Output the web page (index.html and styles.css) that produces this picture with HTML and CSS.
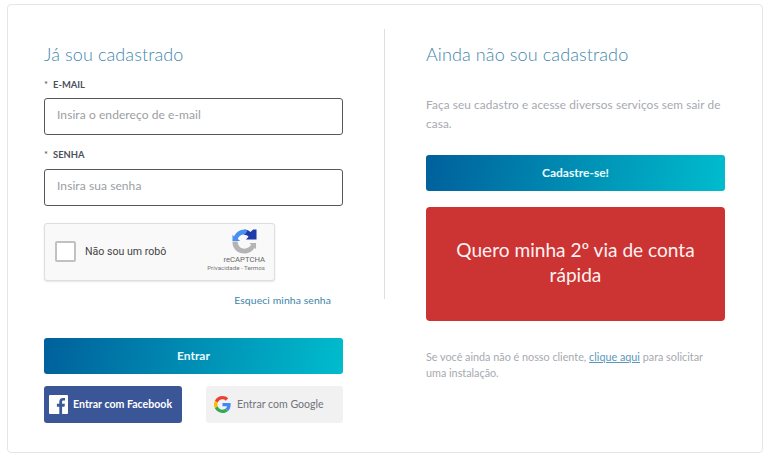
FILE: index.html
```html
<!DOCTYPE html>
<html lang="pt-BR">
<head>
<meta charset="utf-8">
<title>Login</title>
<link rel="stylesheet" href="styles.css">
</head>
<body>
<main class="card">
  <section class="col col-left">
    <h2 class="title">Já sou cadastrado</h2>
    <label class="label label-first"><span class="star">*</span>E-MAIL</label>
    <div class="input">Insira o endereço de e-mail</div>
    <label class="label label-second"><span class="star">*</span>SENHA</label>
    <div class="input">Insira sua senha</div>
    <div class="captcha">
      <span class="check"></span>
      <span class="captcha-text">Não sou um robô</span>
      <div class="captcha-brand">
        <svg class="captcha-logo" width="25" height="25" viewBox="0 0 26 26">
          <path d="M13 .5 C15.500 .5 17.500 1.500 19.200 3.200 L22 .5 L25.500 .5 L25.500 11 L14.500 11 L17.200 8 C16 6.700 14.500 6 12.500 6 Z" fill="#1c3aa9"/>
          <path d="M13 .5 C8 .5 4 3.500 2.200 7.800 L.5 6 L.5 12.500 L8.500 12.500 L6 10.500 C7 7.500 9.500 5.800 12.500 5.800 L13.500 5.800 L16 2 C15 1 14 .5 13 .5 Z" fill="#4a90f0"/>
          <path d="M.5 13 L.5 14 C.5 20.800 6 25.500 13 25.500 C17.500 25.500 21.500 23 23.500 19.500 L25 21 L25 14.500 L18 14.500 L20 16.500 C18.500 19 16 20.500 13 20.500 C9 20.500 6.500 17.500 6 14 L6 13 Z" fill="#b4b4b4"/>
        </svg>
        <span class="captcha-name">reCAPTCHA</span>
        <span class="captcha-links">Privacidade - Termos</span>
      </div>
    </div>
    <a class="forgot">Esqueci minha senha</a>
    <button class="btn btn-grad btn-enter">Entrar</button>
    <div class="social">
      <button class="btn btn-fb">
        <svg class="fb-icon" width="19" height="19" viewBox="0 0 19 19">
          <rect width="19" height="19" rx="1" fill="#fff"/>
          <path d="M13.100 19 V11.700 H15.500 L15.900 8.800 H13.100 V7 C13.100 6.200 13.300 5.600 14.500 5.600 H16 V3.100 C15.700 3 14.900 3 13.900 3 C11.800 3 10.300 4.300 10.300 6.700 V8.800 H7.900 V11.700 H10.300 V19 Z" fill="#3b5998"/>
        </svg>
        <span>Entrar com Facebook</span>
      </button>
      <button class="btn btn-google">
        <svg class="g-icon" width="17" height="17" viewBox="0 0 48 48">
          <path fill="#EA4335" d="M24 9.500c3.500 0 6.700 1.200 9.200 3.600l6.900-6.900C35.900 2.400 30.500 0 24 0 14.600 0 6.500 5.400 2.600 13.200l8 6.200C12.500 13.600 17.800 9.500 24 9.500z"/>
          <path fill="#4285F4" d="M46.900 24.500c0-1.600-.1-3.100-.4-4.500H24v9h12.900c-.6 3-2.200 5.500-4.700 7.200l7.700 6c4.500-4.200 7-10.300 7-17.700z"/>
          <path fill="#FBBC05" d="M10.500 28.600c-.5-1.400-.8-3-.8-4.600s.3-3.200.8-4.600l-8-6.200C.9 16.500 0 20.100 0 24s.9 7.500 2.600 10.800l7.900-6.200z"/>
          <path fill="#34A853" d="M24 48c6.500 0 11.900-2.100 15.900-5.800l-7.700-6c-2.200 1.500-4.900 2.300-8.200 2.300-6.200 0-11.500-4.200-13.400-9.800l-8 6.200C6.500 42.600 14.600 48 24 48z"/>
        </svg>
        <span>Entrar com Google</span>
      </button>
    </div>
  </section>
  <div class="divider"></div>
  <section class="col col-right">
    <h2 class="title">Ainda não sou cadastrado</h2>
    <p class="text text-top">Faça seu cadastro e acesse diversos serviços sem sair de casa.</p>
    <button class="btn btn-grad btn-signup">Cadastre-se!</button>
    <button class="btn-red">Quero minha 2º via de conta rápida</button>
    <p class="text text-bottom">Se você ainda não é nosso cliente, <a class="link">clique aqui</a> para solicitar uma instalação.</p>
  </section>
</main>
</body>
</html>
```
FILE: styles.css
```css
* { box-sizing: border-box; }
html, body { margin: 0; padding: 0; }
body {
  width: 768px;
  height: 456px;
  overflow: hidden;
  background: #fff;
  font-family: Lato, "Open Sans", sans-serif;
}
.card {
  display: flex;
  align-items: flex-start;
  width: 756px;
  height: 449px;
  margin: 4px 0 0 7px;
  padding: 23px 37px 0 36px;
  border: 1px solid #e3e5e8;
  border-radius: 4px;
  background: #fff;
}
.col { width: 299px; flex: none; display: flex; flex-direction: column; }
.divider {
  width: 1px;
  height: 270px;
  margin: 1px 41px 0;
  background: #dcdee0;
  flex: none;
}
.title {
  margin: 17px 0 0;
  height: 19px;
  line-height: 19px;
  font-size: 18px;
  font-weight: 300;
  letter-spacing: .11px;
  color: #3f87ae;
  white-space: nowrap;
}
.label {
  display: block;
  height: 12px;
  line-height: 12px;
  font-size: 9.4px;
  font-weight: 700;
  color: #4c5160;
}
.label-first { margin-top: 15px; }
.label-second { margin-top: 14px; }
.star { display: inline-block; width: 9px; font-weight: 400; }
.input {
  margin-top: 7px;
  height: 37px;
  padding: 0 12px;
  line-height: 31px;
  font-size: 12px;
  letter-spacing: .08px;
  color: #9b9ea3;
  background: #fff;
  border: 1px solid #55585e;
  border-radius: 3px;
}
.label-second + .input { margin-top: 8px; }
.captcha {
  position: relative;
  display: flex;
  align-items: center;
  width: 231px;
  height: 58px;
  margin-top: 17px;
  padding: 0 0 1px 10px;
  background: #f9f9f9;
  border: 1px solid #dedede;
  border-radius: 3px;
  box-shadow: 0 1px 2px rgba(0,0,0,.1);
}
.check {
  width: 21px;
  height: 21px;
  background: #fff;
  border: 2px solid #c1c1c1;
  border-radius: 2px;
  flex: none;
}
.captcha-text {
  margin-left: 9px;
  font-family: Roboto, sans-serif;
  font-size: 10.6px;
  color: #444;
}
.captcha-brand {
  position: absolute;
  top: 5px;
  right: 9px;
  width: 60px;
  display: flex;
  flex-direction: column;
  align-items: flex-end;
  font-family: Roboto, sans-serif;
  color: #666;
}
.captcha-logo { display: block; margin-right: 8px; }
.captcha-name { margin-top: 1px; font-size: 7.7px; line-height: 9px; white-space: nowrap; }
.captcha-links { font-size: 6.2px; line-height: 9px; white-space: nowrap; color: #777; }
.forgot {
  align-self: flex-end;
  margin: 12px 12px 0 0;
  height: 14px;
  line-height: 14px;
  font-size: 10.4px;
  letter-spacing: .1px;
  color: #3c84a8;
}
.btn {
  display: flex;
  align-items: center;
  justify-content: center;
  margin: 0;
  border: 0;
  border-radius: 3px;
  font-family: inherit;
  font-size: 12px;
  font-weight: 700;
  color: #fff;
}
.btn-grad {
  width: 299px;
  background: linear-gradient(100deg, #00609b 0%, #00bccd 100%);
  color: #eafcff;
}
.btn-enter { height: 36px; margin-top: 31px; padding-bottom: 3px; }
.btn-signup { height: 36px; margin-top: 22px; padding-bottom: 2px; }
.social { display: flex; justify-content: space-between; margin-top: 12px; }
.btn-fb {
  width: 138px;
  height: 37px;
  padding: 0 0 0 5px;
  justify-content: flex-start;
  gap: 5px;
  background: #3b5696;
  font-size: 10.6px;
  white-space: nowrap;
}
.btn-fb span, .btn-google span { padding-bottom: 2px; }
.fb-icon, .g-icon { flex: none; }
.btn-google {
  width: 137px;
  height: 37px;
  padding: 0 0 0 8px;
  justify-content: flex-start;
  gap: 6px;
  background: #f1f1f1;
  color: #70737a;
  font-size: 10.6px;
  font-weight: 400;
  white-space: nowrap;
}
.text {
  margin: 0;
  color: #a6a9b0;
}
.text-top { margin-top: 31px; font-size: 11.8px; line-height: 19px; letter-spacing: .1px; }
.text-bottom { margin-top: 28px; font-size: 10.8px; line-height: 16px; letter-spacing: 0; }
.link { color: #5c98bb; text-decoration: underline; }
.btn-red {
  width: 299px;
  height: 114px;
  margin-top: 16px;
  padding: 0 20px 4px;
  border: 0;
  border-radius: 4px;
  background: #cc3333;
  color: #fdf1f1;
  font-family: inherit;
  font-size: 19.1px;
  line-height: 25px;
  font-weight: 400;
}
```
